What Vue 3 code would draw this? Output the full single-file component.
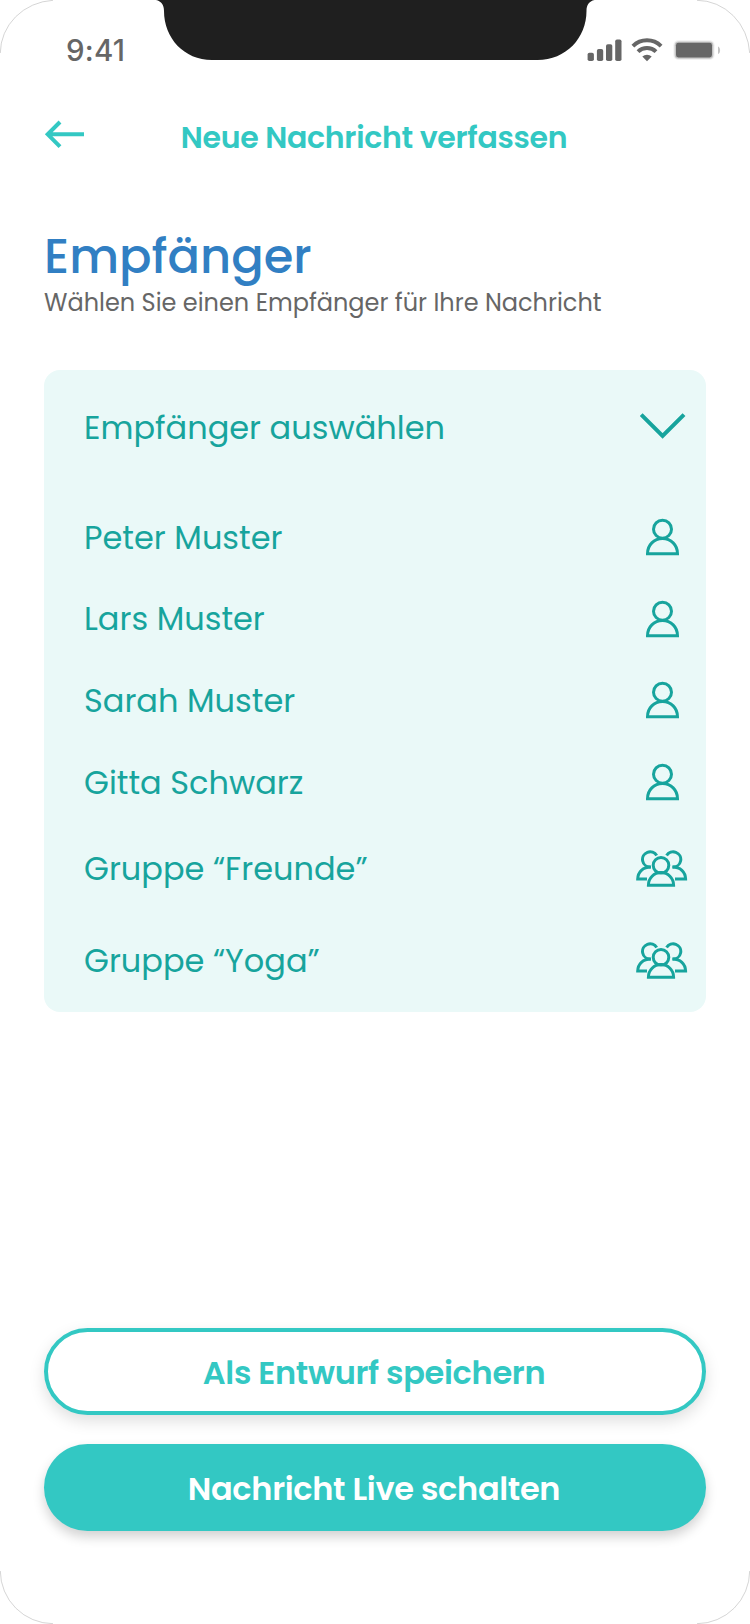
<template>
  <div class="screen">
    <header class="status">
      <span class="status__time">9:41</span>
      <svg class="status__icons" viewBox="0 0 136 26" fill="#666">
        <rect x="1.6" y="14.8" width="6.3" height="8.2" rx="1.8" />
        <rect x="10.9" y="11" width="6.3" height="12" rx="1.8" />
        <rect x="20" y="6.2" width="6.3" height="16.8" rx="1.8" />
        <rect x="29.2" y="1.4" width="6.3" height="21.6" rx="1.8" />
        <g fill="none" stroke="#666" stroke-width="4">
          <path d="M46.9 8.1a20.2 20.2 0 0 1 28.2 0" />
          <path d="M52 13.6a13 13 0 0 1 18 0" />
        </g>
        <path d="M56.3 18.4a7.2 7.2 0 0 1 9.4 0L61 23.2z" />
        <rect x="87.4" y="2.2" width="41.2" height="19.8" rx="5" fill="#f0f0f0" />
        <rect x="88.6" y="3.4" width="38.8" height="17.4" rx="4" fill="#c4c4c4" />
        <rect x="90" y="4.8" width="36" height="14.6" rx="2.4" />
        <path d="M132 8.4c2.8 1 2.8 6.6 0 7.6z" fill="#c4c4c4" />
      </svg>
      <svg class="status__notch" viewBox="0 0 440 61">
        <path d="M1 0C6.5 1.2 9 5 9 11C9 38 29 60 57 60H382.5C411 60 431.5 38 431.5 11C431.5 5 434 1.2 439.5 0Z" fill="#1f1f1f" />
      </svg>
    </header>

    <nav class="nav">
      <button class="nav__back" aria-label="Zurück">
        <svg viewBox="0 0 44 30" fill="none" stroke="currentColor" stroke-width="4">
          <path d="M4 15.3H41M17 3 4.7 15.3 17 27.6" />
        </svg>
      </button>
      <h2 class="nav__title">Neue Nachricht verfassen</h2>
    </nav>

    <main class="content">
      <h1 class="content__title">Empfänger</h1>
      <p class="content__hint">Wählen Sie einen Empfänger für Ihre Nachricht</p>

      <section class="select">
        <button class="select__header" @click="open = !open">
          <span class="select__label">Empfänger auswählen</span>
          <svg class="select__icon" viewBox="0 0 54 38" fill="none" stroke="currentColor">
            <path d="M5.2 6.6 26.6 28 48 6.6" stroke-width="4" />
          </svg>
        </button>
        <ul v-if="open" class="select__list">
          <li
            v-for="r in recipients"
            :key="r.name"
            class="option"
            :class="{ 'option--group': r.group, 'option--active': r.name === selected }"
            @click="selected = r.name"
          >
            <span class="select__label">{{ r.name }}</span>
            <svg v-if="r.group" class="select__icon" viewBox="0 0 54 38" fill="none" stroke="currentColor" stroke-width="3">
              <circle cx="25" cy="15.3" r="7.8" />
              <path d="M12.4 35.2a12.6 12.6 0 0 1 25.2 0z" />
              <path d="M20.7 5.6A7.6 7.6 0 1 0 14.5 17" />
              <path d="M15 17C7 17 1.9 21.7 1.7 29.1H11" />
              <path d="M30.6 5.6A7.6 7.6 0 1 1 36.8 17" />
              <path d="M36.3 17C44.3 17 49.4 21.7 49.6 29.1H39" />
            </svg>
            <svg v-else class="select__icon" viewBox="0 0 54 38" fill="none" stroke="currentColor" stroke-width="3">
              <circle cx="26.5" cy="11.2" r="9" />
              <path d="M11.5 35.7C11.5 27.1 18 20.5 26.5 20.5S41.5 27.1 41.5 35.7Z" />
            </svg>
          </li>
        </ul>
      </section>
    </main>

    <footer class="actions">
      <button class="btn btn--outline">Als Entwurf speichern</button>
      <button class="btn btn--primary">Nachricht Live schalten</button>
    </footer>

    <!-- rounded device corners -->
    <svg class="corners" viewBox="0 0 750 1624" fill="none" stroke="#aaa" stroke-width="0.5">
      <path d="M.3 53A56 53 0 0 1 53 .3M697 .3A53 56 0 0 1 749.7 53M749.7 1571A53 53 0 0 1 697 1623.7M53 1623.7A53 53 0 0 1 .3 1571" />
    </svg>
  </div>
</template>

<script setup>
import { ref } from 'vue'

const open = ref(true)
const selected = ref('')

const recipients = [
  { name: 'Peter Muster', group: false },
  { name: 'Lars Muster', group: false },
  { name: 'Sarah Muster', group: false },
  { name: 'Gitta Schwarz', group: false },
  { name: 'Gruppe “Freunde”', group: true },
  { name: 'Gruppe “Yoga”', group: true },
]
</script>

<style>
body {
  margin: 0;
  background: #fff;
}
</style>

<style scoped>
.screen {
  position: relative;
  display: flex;
  flex-direction: column;
  box-sizing: border-box;
  width: 750px;
  height: 1624px;
  background: #fff;
  overflow: hidden;
  font-family: Poppins, Inter, sans-serif;
}

h1, h2, p, ul { margin: 0; padding: 0; }

button {
  padding: 0;
  border: none;
  background: none;
  color: inherit;
  font: inherit;
  cursor: pointer;
}

.status {
  position: relative;
  display: flex;
  justify-content: space-between;
  align-items: center;
  height: 100px;
  padding: 0 28px 0 66px;
  box-sizing: border-box;
}

.status__time {
  font-family: Inter, sans-serif;
  font-size: 29.5px;
  font-weight: 550;
  letter-spacing: 0.2px;
  color: #666;
}

.status__icons {
  width: 136px;
  height: 26px;
  margin-top: 2px;
}

/* the camera notch lies over the bar */
.status__notch {
  position: absolute;
  top: 0;
  left: 155px;
  width: 440px;
  height: 61px;
}

.nav {
  display: grid;
  grid-template-columns: 44px 1fr 44px;
  align-items: center;
  height: 75px;
  padding: 0 43px;
  color: #33c8c3;
}

.nav__back {
  align-self: start;
  height: 30px;
  margin-top: 19px;
}

.nav__back svg { display: block; width: 44px; height: 30px; }

.nav__title {
  padding: 1px 2px 0 0;
  font-size: 30px;
  font-weight: 600;
  letter-spacing: -0.01em;
  text-align: center;
  white-space: nowrap;
}

.content { padding: 54px 44px 0; }

.content__title {
  font-size: 48px;
  line-height: 56px;
  font-weight: 500;
  color: #317fc3;
}

.content__hint {
  font-size: 24px;
  line-height: 36px;
  white-space: nowrap;
  color: #666;
}

.select {
  height: 642px;
  margin-top: 49px;
  border-radius: 16px;
  background: #eaf9f8;
  color: #17a49d;
  font-size: 32px;
  overflow: hidden;
}

.select__header {
  display: flex;
  align-items: center;
  justify-content: space-between;
  box-sizing: border-box;
  width: 100%;
  height: 114px;
  margin-bottom: 12px;
  padding: 0 16px 0 40px;
}

.select__label { padding-top: 1.5px; }
.select__icon { width: 54px; height: 38px; }
.select__list { list-style: none; }

.option {
  display: flex;
  align-items: center;
  justify-content: space-between;
  height: 81.8px;
  padding: 0 16px 0 40px;
  cursor: pointer;
}

.option--group { height: 92px; }
.option--group .select__label { padding-top: 0; }
.option--active { font-weight: 500; }

.actions {
  display: flex;
  flex-direction: column;
  gap: 29.5px;
  margin-top: auto;
  padding: 0 44px 93.5px;
}

.btn {
  box-sizing: border-box;
  height: 86.5px;
  padding: 3px 2px 0 0;
  border-radius: 44px;
  font-size: 32px;
  font-weight: 600;
  letter-spacing: -0.01em;
  box-shadow: 0 6px 12px rgba(0, 0, 0, 0.18);
}

.btn--outline {
  border: 4px solid #33c8c3;
  background: #fff;
  color: #33c8c3;
  box-shadow: 0 6px 16px rgba(0, 0, 0, 0.13);
}

.btn--primary {
  background: #33c8c3;
  color: #fff;
}

.corners {
  position: absolute;
  inset: 0;
  width: 750px;
  height: 1624px;
  pointer-events: none;
}
</style>
